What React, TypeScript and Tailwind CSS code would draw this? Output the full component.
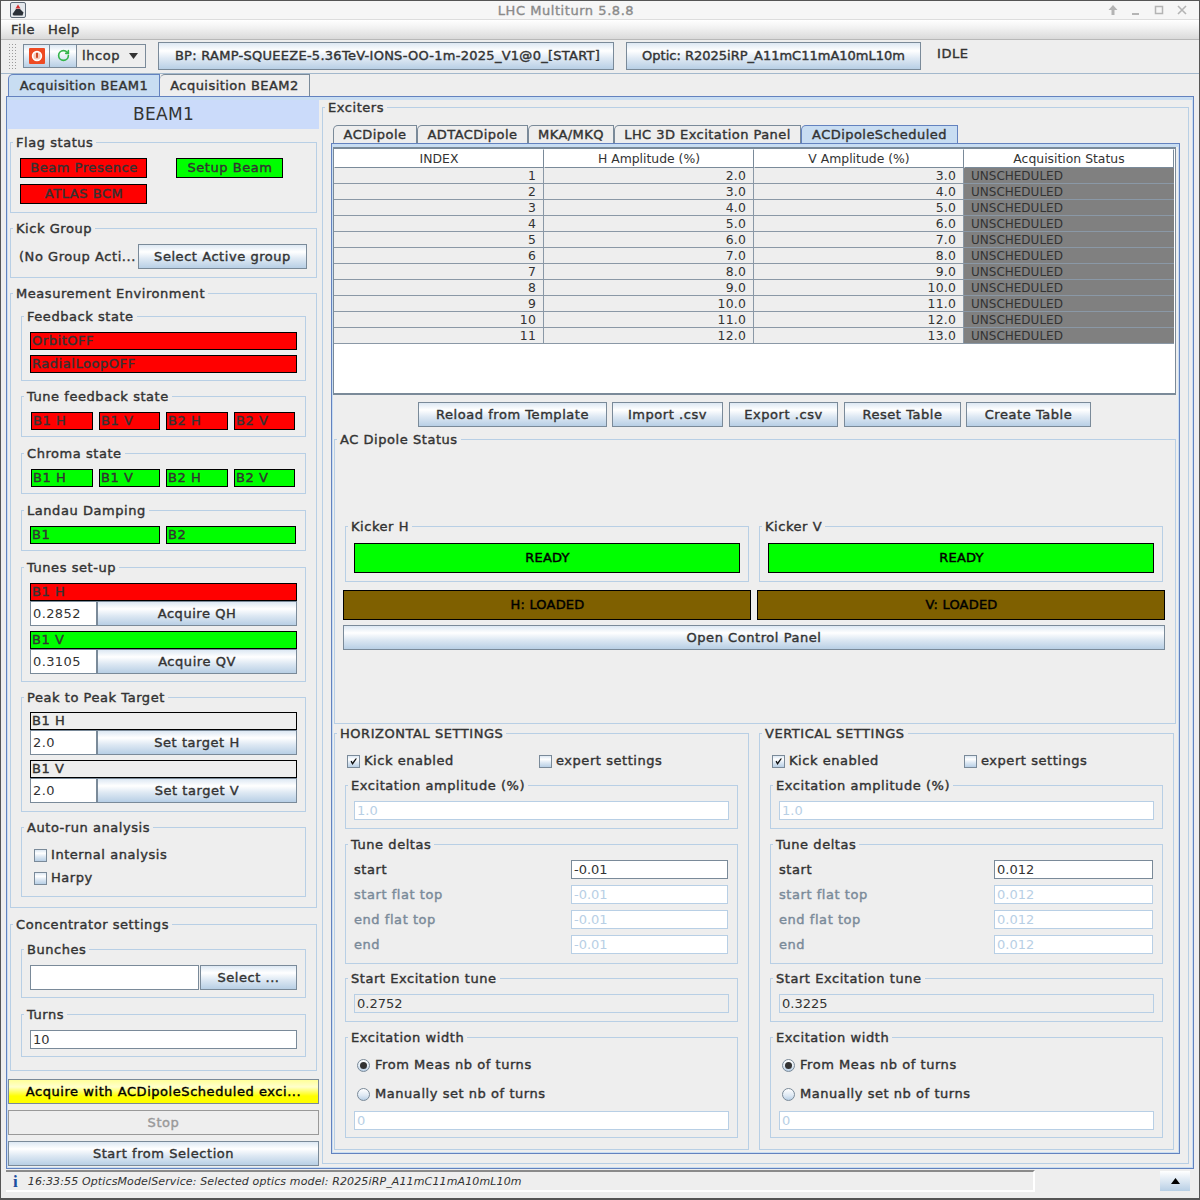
import * as React from "react";
import { RotateCw } from "lucide-react";

const GRAD = "bg-[linear-gradient(#dde8f3_0%,#ffffff_30%,#dde8f3_60%,#b8cfe5_100%)]";
const BOLD = "[-webkit-text-stroke:0.4px_#333333] tracking-[0.55px]";
const BLACK = "text-black! [-webkit-text-stroke:0.45px_#000]! tracking-[0.2px]!";

function Group({ title, className, inner, children }: { title: string; className?: string; inner?: string; children?: React.ReactNode }) {
  return (
    <fieldset className={`border border-[#b8cfe5] ${className ?? ""}`}>
      <legend className={`ml-[2px] h-[16px] px-[3px] text-[13px] leading-[18px] text-[#333333] ${BOLD}`}>{title}</legend>
      <div className={inner ?? "px-[8px] pt-[8px]"}>{children}</div>
    </fieldset>
  );
}

function Button({ label, className }: { label: string; className?: string }) {
  return <div className={`flex items-center justify-center border border-[#7a8a99] ${GRAD} text-[13px] text-[#333333] ${BOLD} ${className ?? ""}`}>{label}</div>;
}

function Pill({ label, color, className, center }: { label: string; color: string; className?: string; center?: boolean }) {
  return (
    <div className={`flex h-[18px] items-center border border-black pl-[1px] text-[13px] ${color} text-[#333333] ${BOLD} ${center ? "justify-center" : ""} ${className ?? ""}`}>
      {label}
    </div>
  );
}

function Field({ value, disabled, className }: { value: string; disabled?: boolean; className?: string }) {
  return (
    <div
      className={`flex items-center bg-white pl-[2px] text-[13px] ${
        disabled ? "border border-[#b8cfe5] text-[#b8cfe5]" : "border border-[#7a8a99] text-[#333333]"
      } ${className ?? ""}`}
    >
      {value}
    </div>
  );
}

function Check({ label, checked, className }: { label: string; checked?: boolean; className?: string }) {
  return (
    <div className={`flex items-center text-[13px] text-[#333333] ${BOLD} ${className ?? ""}`}>
      <span className={`mr-[4px] flex h-[13px] w-[13px] items-center justify-center border border-[#7a8a99] ${GRAD}`}>
        {checked && (
          <svg width="9" height="9" viewBox="0 0 9 9">
            <path d="M1.5 4.5 L3.5 8 L8 1.5 L6.5 1.5 L3.5 5.5 L2.8 3.8 Z" fill="#111" />
          </svg>
        )}
      </span>
      {label}
    </div>
  );
}

function Radio({ label, selected, className }: { label: string; selected?: boolean; className?: string }) {
  return (
    <div className={`flex items-center text-[13px] text-[#333333] ${BOLD} ${className ?? ""}`}>
      <span className="mr-[5px] flex h-[13px] w-[13px] items-center justify-center rounded-full border border-[#7a8a99] bg-[linear-gradient(#ffffff,#dde8f3_60%,#b8cfe5)]">
        {selected && <span className="h-[7px] w-[7px] rounded-full bg-[#333333]" />}
      </span>
      {label}
    </div>
  );
}

function TuneRow({ label, value, w, enabled }: { label: string; value: string; w: string; enabled?: boolean }) {
  return (
    <div className="flex h-[19px] items-center justify-between">
      <span className={`text-[13px] ${BOLD} ${enabled ? "text-[#333333]" : "text-[#7a8a99] [-webkit-text-stroke:0.4px_#7a8a99]!"}`}>{label}</span>
      <Field value={value} disabled={!enabled} className={`h-[19px] ${w}`} />
    </div>
  );
}

function Settings({ title, amp, delta, tune, fieldW }: { title: string; amp: string; delta: string; tune: string; fieldW: string }) {
  return (
    <Group title={title} className="h-[425px] w-[415px]" inner="pl-[10px]">
      <div className="mt-[10px] flex h-[20px] items-center pl-[2px]">
        <Check label="Kick enabled" checked className="w-[192px]" />
        <Check label="expert settings" />
      </div>
      <Group title="Excitation amplitude (%)" className="mt-[6px] h-[52px] w-[393px]">
        <Field value={amp} disabled className="h-[19px]" />
      </Group>
      <Group title="Tune deltas" className="mt-[7px] h-[128px] w-[393px]" inner="pl-[8px] pr-[9px] pt-[8px]">
        <div className="flex flex-col gap-[6px]">
          <TuneRow label="start" value={delta} w={fieldW} enabled />
          <TuneRow label="start flat top" value={delta} w={fieldW} />
          <TuneRow label="end flat top" value={delta} w={fieldW} />
          <TuneRow label="end" value={delta} w={fieldW} />
        </div>
      </Group>
      <Group title="Start Excitation tune" className="mt-[6px] h-[52px] w-[393px]">
        <div className="flex h-[19px] items-center border border-[#b8cfe5] bg-[#eeeeee] pl-[2px] text-[13px] text-[#333333]">{tune}</div>
      </Group>
      <Group title="Excitation width" className="mt-[7px] h-[109px] w-[393px]">
        <Radio label="From Meas nb of turns" selected className="ml-[3px] mt-[2px] h-[20px]" />
        <Radio label="Manually set nb of turns" className="ml-[3px] mt-[9px] h-[20px]" />
        <Field value="0" disabled className="mt-[7px] h-[19px]" />
      </Group>
    </Group>
  );
}

const ROWS = [
  [1, "2.0", "3.0"], [2, "3.0", "4.0"], [3, "4.0", "5.0"], [4, "5.0", "6.0"], [5, "6.0", "7.0"], [6, "7.0", "8.0"],
  [7, "8.0", "9.0"], [8, "9.0", "10.0"], [9, "10.0", "11.0"], [10, "11.0", "12.0"], [11, "12.0", "13.0"],
];

function Table() {
  const cell = "flex h-[16px] items-center justify-end border-r border-b border-[#8a98a6] bg-[#eeeeee] pt-[1px] pr-[7px] text-[12.4px] tracking-[0.2px] text-[#333333]";
  const head = "flex h-[19px] items-center justify-center border-t border-r border-b border-l border-[#7a8a99] border-t-white border-l-white pt-[1px] text-[12.4px] text-[#333333]";
  return (
    <div className="h-[248px] w-[843px] border-t-2 border-r border-b-2 border-l border-[#7a8a99] bg-white">
      <div className="grid w-[840px] grid-cols-[210px_210px_210px_210px]">
        <div className={head}>INDEX</div>
        <div className={head}>H Amplitude (%)</div>
        <div className={head}>V Amplitude (%)</div>
        <div className={head}>Acquisition Status</div>
        {ROWS.map((r) => (
          <React.Fragment key={String(r[0])}>
            <div className={cell}>{r[0]}</div>
            <div className={cell}>{r[1]}</div>
            <div className={cell}>{r[2]}</div>
            <div className="flex h-[16px] items-center border-b border-[#8a98a6] bg-[#808080] pl-[7px] text-[12px] text-[#333333]">UNSCHEDULED</div>
          </React.Fragment>
        ))}
      </div>
    </div>
  );
}

function TunePills({ color }: { color: string }) {
  return (
    <div className="flex gap-[6px]">
      <Pill label="B1 H" color={color} className="w-[62px]" />
      <Pill label="B1 V" color={color} className="w-[61px]" />
      <Pill label="B2 H" color={color} className="w-[62px]" />
      <Pill label="B2 V" color={color} className="w-[61px]" />
    </div>
  );
}

function LeftPanel() {
  return (
    <div className="w-[311px] shrink-0">
      <div className="flex h-[29px] items-center justify-center bg-[#cbdbfa] text-[17px] tracking-[0.3px] text-[#333333]">BEAM1</div>
      <div className="mt-[5px] flex flex-col pl-[2px]">
        <Group title="Flag status" className="h-[79px] w-[307px]" inner="pt-[8px] pl-[9px]">
          <div className="flex h-[20px]">
            <Pill label="Beam Presence" color="bg-[#ff0000]" center className="h-[20px] w-[127px]" />
            <Pill label="Setup Beam" color="bg-[#00ff00]" center className="ml-[29px] h-[20px] w-[107px]" />
          </div>
          <Pill label="ATLAS BCM" color="bg-[#ff0000]" center className="mt-[6px] h-[20px] w-[127px]" />
        </Group>
        <Group title="Kick Group" className="mt-[7px] h-[58px] w-[307px]" inner="pt-[8px] pl-[8px]">
          <div className="flex h-[25px] items-center">
            <span className={`w-[119px] whitespace-nowrap text-[13px] text-[#333333] ${BOLD}`}>(No Group Acti...</span>
            <Button label="Select Active group" className="h-[25px] w-[169px]" />
          </div>
        </Group>
        <Group title="Measurement Environment" className="mt-[7px] h-[623px] w-[307px]" inner="px-[10px]">
          <Group title="Feedback state" className="mt-[7px] h-[73px] w-[285px]">
            <Pill label="OrbitOFF" color="bg-[#ff0000]" className="w-[267px]" />
            <Pill label="RadialLoopOFF" color="bg-[#ff0000]" className="mt-[5px] w-[267px]" />
          </Group>
          <Group title="Tune feedback state" className="mt-[7px] h-[49px] w-[285px]" inner="pl-[9px] pt-[8px]">
            <TunePills color="bg-[#ff0000]" />
          </Group>
          <Group title="Chroma state" className="mt-[8px] h-[49px] w-[285px]" inner="pl-[9px] pt-[8px]">
            <TunePills color="bg-[#00ff00]" />
          </Group>
          <Group title="Landau Damping" className="mt-[8px] h-[49px] w-[285px]">
            <div className="flex gap-[6px]">
              <Pill label="B1" color="bg-[#00ff00]" className="w-[130px]" />
              <Pill label="B2" color="bg-[#00ff00]" className="w-[130px]" />
            </div>
          </Group>
          <Group title="Tunes set-up" className="mt-[8px] h-[123px] w-[285px]">
            <Pill label="B1 H" color="bg-[#ff0000]" className="w-[267px]" />
            <div className="flex h-[25px]">
              <Field value="0.2852" className="w-[67px] tracking-[0.4px]" />
              <Button label="Acquire QH" className="w-[200px]" />
            </div>
            <Pill label="B1 V" color="bg-[#00ff00]" className="mt-[5px] w-[267px]" />
            <div className="flex h-[25px]">
              <Field value="0.3105" className="w-[67px] tracking-[0.4px]" />
              <Button label="Acquire QV" className="w-[200px]" />
            </div>
          </Group>
          <Group title="Peak to Peak Target" className="mt-[7px] h-[123px] w-[285px]" inner="px-[8px] pt-[7px]">
            <Pill label="B1 H" color="bg-[#eeeeee]" className="w-[267px]" />
            <div className="flex h-[25px]">
              <Field value="2.0" className="w-[67px] tracking-[0.4px]" />
              <Button label="Set target H" className="w-[200px]" />
            </div>
            <Pill label="B1 V" color="bg-[#eeeeee]" className="mt-[5px] w-[267px]" />
            <div className="flex h-[25px]">
              <Field value="2.0" className="w-[67px] tracking-[0.4px]" />
              <Button label="Set target V" className="w-[200px]" />
            </div>
          </Group>
          <Group title="Auto-run analysis" className="mt-[7px] h-[78px] w-[285px]" inner="pl-[12px] pt-[7px]">
            <Check label="Internal analysis" className="mt-[3px] h-[20px]" />
            <Check label="Harpy" className="mt-[3px] h-[20px]" />
          </Group>
        </Group>
        <Group title="Concentrator settings" className="mt-[8px] h-[155px] w-[307px]" inner="px-[10px]">
          <Group title="Bunches" className="mt-[9px] h-[57px] w-[285px]">
            <div className="flex h-[25px] justify-between">
              <Field value="" className="w-[169px]" />
              <Button label="Select ..." className="w-[97px]" />
            </div>
          </Group>
          <Group title="Turns" className="mt-[8px] h-[51px] w-[285px]">
            <Field value="10" className="h-[19px] w-[267px]" />
          </Group>
        </Group>
      </div>
      <div className="mt-[8px] flex flex-col gap-[6px]">
        <div className="flex h-[25px] items-center justify-center border border-[#7a8a99] bg-[linear-gradient(#ffff99,#ffffcc_30%,#ffff00_70%,#ffff00)] text-[13px] tracking-[0.55px] text-black [-webkit-text-stroke:0.4px_#000]">Acquire with ACDipoleScheduled exci...</div>
        <div className="flex h-[25px] items-center justify-center border border-[#999999] text-[13px] tracking-[0.55px] text-[#999999] [-webkit-text-stroke:0.4px_#999999]">Stop</div>
        <Button label="Start from Selection" className="h-[25px]" />
      </div>
    </div>
  );
}

function InnerTab({ label, active, className }: { label: string; active?: boolean; className?: string }) {
  return (
    <div className={`flex h-[18px] items-center justify-center rounded-tl-[5px] border-t border-r border-l text-[13px] text-[#333333] ${BOLD} tracking-[0.45px]! ${active ? "border-[#6382bf] bg-[#c8ddf2]" : "border-[#7a8a99] bg-[#eeeeee]"} ${className ?? ""}`}>
      {label}
    </div>
  );
}

function RightPanel() {
  return (
    <Group title="Exciters" className="-mt-[1px] ml-[3px] h-[1065px] w-[867px]" inner="pl-[8px]">
      <div className="mt-[10px] flex pl-[2px]">
        <InnerTab label="ACDipole" className="w-[84px]" />
        <InnerTab label="ADTACDipole" className="w-[111px]" />
        <InnerTab label="MKA/MKQ" className="w-[86px]" />
        <InnerTab label="LHC 3D Excitation Panel" className="w-[187px]" />
        <InnerTab label="ACDipoleScheduled" active className="w-[157px]" />
      </div>
      <div className="h-[1011px] w-[849px] border border-[#6382bf]">
        <div className="h-full border border-t-[3px] border-[#c8ddf2]">
          <Table />
          <div className="mt-[7px] flex pl-[85px]">
            <Button label="Reload from Template" className="h-[25px] w-[189px]" />
            <Button label="Import .csv" className="ml-[5px] h-[25px] w-[111px]" />
            <Button label="Export .csv" className="ml-[6px] h-[25px] w-[109px]" />
            <Button label="Reset Table" className="ml-[6px] h-[25px] w-[117px]" />
            <Button label="Create Table" className="ml-[5px] h-[25px] w-[125px]" />
          </div>
          <Group title="AC Dipole Status" className="ml-[1px] mt-[4px] h-[293px] w-[842px]" inner="">
            <div className="ml-[10px] mt-[71px] flex gap-[10px]">
              <Group title="Kicker H" className="h-[64px] w-[404px]" inner="px-[8px] pt-[9px]">
                <Pill label="READY" color="bg-[#00ff00]" center className={`h-[30px] w-[386px] ${BLACK}`} />
              </Group>
              <Group title="Kicker V" className="h-[64px] w-[404px]" inner="px-[8px] pt-[9px]">
                <Pill label="READY" color="bg-[#00ff00]" center className={`h-[30px] w-[386px] ${BLACK}`} />
              </Group>
            </div>
            <div className="ml-[8px] mt-[8px] flex gap-[6px]">
              <Pill label="H: LOADED" color="bg-[#7f6000]" center className={`h-[30px] w-[408px] ${BLACK}`} />
              <Pill label="V: LOADED" color="bg-[#7f6000]" center className={`h-[30px] w-[408px] ${BLACK}`} />
            </div>
            <Button label="Open Control Panel" className="ml-[8px] mt-[5px] h-[25px] w-[822px]" />
          </Group>
          <div className="ml-[1px] mt-[1px] flex gap-[10px]">
            <Settings title="HORIZONTAL SETTINGS" amp="1.0" delta="-0.01" tune="0.2752" fieldW="w-[157px]" />
            <Settings title="VERTICAL SETTINGS" amp="1.0" delta="0.012" tune="0.3225" fieldW="w-[159px]" />
          </div>
        </div>
      </div>
    </Group>
  );
}

export default function App() {
  return (
    <div className="flex h-[1200px] w-[1200px] flex-col overflow-hidden border-t border-r border-b-2 border-l border-[#555555] bg-[#eeeeee] font-['DejaVu_Sans',sans-serif] text-[13px] text-[#333333]">
      <div className="flex h-[18px] shrink-0 items-center bg-[#f6f6f6] pl-[9px] pr-[3px]">
        <svg width="16" height="16" viewBox="0 0 16 16">
          <rect x="0.5" y="0.5" width="15" height="15" rx="1.5" fill="#e4e8ec" stroke="#5f6b78" />
          <path d="M2.5 12 L6 7 L10 7 L13.5 10.5 L12.5 13.5 L3.5 13.5 Z" fill="#2b3138" />
          <path d="M8 2.5 L10.5 6.5 L5.5 6.5 Z" fill="#d03030" />
        </svg>
        <span className="mt-[2px] grow text-center text-[13px] tracking-[0.55px] text-[#8a8a8a] [-webkit-text-stroke:0.35px_#8a8a8a]">LHC Multiturn 5.8.8</span>
        <div className="flex items-center gap-[9px] pr-[7px]">
          <svg width="14" height="14" viewBox="0 0 14 14"><path d="M7 2 L11.5 7 L8.5 7 L8.5 12 L5.5 12 L5.5 7 L2.5 7 Z" fill="#b4b4b4" /></svg>
          <svg width="14" height="14" viewBox="0 0 14 14"><rect x="3" y="10" width="7" height="2" fill="#b4b4b4" /></svg>
          <svg width="14" height="14" viewBox="0 0 14 14"><rect x="3.5" y="3.5" width="7" height="7" fill="none" stroke="#b4b4b4" strokeWidth="1.5" /></svg>
          <svg width="14" height="14" viewBox="0 0 14 14"><path d="M3 3 L11 11 M11 3 L3 11" stroke="#b4b4b4" strokeWidth="1.6" /></svg>
        </div>
      </div>
      <div className={`flex h-[20px] shrink-0 items-center gap-[13px] border-t border-[#dddddd] bg-[linear-gradient(#ffffff,#f2f2f2_40%,#dadada)] pl-[10px] text-[13px] ${BOLD}`}>
        <span>File</span>
        <span>Help</span>
      </div>
      <div className="flex h-[34px] shrink-0 items-center border-t border-[#b8b8b8] pb-[2px] pl-[7px]">
        <div className="h-[26px] w-[9px] bg-[radial-gradient(#9a9a9a_0.8px,transparent_1px)] bg-[length:3px_3px]" />
        <div className="ml-[6px] flex h-[24px]">
          <div className={`flex w-[27px] items-center justify-center border border-[#7a8a99] ${GRAD}`}>
            <span className="flex h-[16px] w-[16px] items-center justify-center rounded-[1px] bg-[#ee4a22]">
              <svg width="12" height="12" viewBox="0 0 12 12"><circle cx="6" cy="6" r="4.4" fill="#f6c9b8" stroke="#fff" strokeWidth="1.6" /><rect x="5.1" y="2.8" width="1.8" height="5" fill="#c93a18" /></svg>
            </span>
          </div>
          <div className={`flex w-[27px] items-center justify-center border-y border-r border-[#7a8a99] ${GRAD}`}>
            <RotateCw size={13} color="#35b54a" strokeWidth={3} />
          </div>
          <div className={`flex w-[69px] items-center border-y border-r border-[#7a8a99] pl-[5px] text-[13px] ${BOLD}`}>
            lhcop
            <svg className="ml-[9px]" width="9" height="6" viewBox="0 0 9 6"><path d="M0 0 H9 L4.5 6 Z" fill="#333" /></svg>
          </div>
        </div>
        <Button label="BP: RAMP-SQUEEZE-5.36TeV-IONS-OO-1m-2025_V1@0_[START]" className="ml-[12px] h-[28px] w-[456px] pl-[3px] tracking-[0.27px]!" />
        <Button label="Optic: R2025iRP_A11mC11mA10mL10m" className="ml-[12px] h-[28px] w-[295px] tracking-[0px]!" />
        <span className={`mb-[4px] ml-[16px] ${BOLD}`}>IDLE</span>
      </div>
      <div className="flex h-[23px] shrink-0 items-end border-t border-[#a3b8cc] pl-[7px]">
        <div className={`flex h-[22px] w-[152px] items-center justify-center rounded-tl-[5px] border-t border-r border-l border-[#6382bf] bg-[#c8ddf2] ${BOLD} tracking-[0.45px]!`}>Acquisition BEAM1</div>
        <div className={`flex h-[22px] w-[150px] items-center justify-center rounded-tl-[5px] border-t border-r border-[#7a8a99] ${BOLD} tracking-[0.45px]!`}>Acquisition BEAM2</div>
      </div>
      <div className="ml-[5px] h-[1073px] w-[1188px] shrink-0 border border-[#6382bf]">
        <div className="flex h-full border border-t-[3px] border-[#c8ddf2]">
          <LeftPanel />
          <RightPanel />
        </div>
      </div>
      <div className="ml-[5px] mt-[1px] flex h-[22px] items-center">
        <div className="flex h-[22px] w-[1029px] items-center border-t-2 border-r-2 border-b-2 border-t-[#8a8a8a] border-r-white border-b-white pl-[7px] pt-[2px] text-[11px] italic tracking-[0.13px]">
          <span className="mr-[10px] font-['Liberation_Serif',serif] text-[17px] font-bold not-italic text-[#1a4fa0]">i</span>
          16:33:55 OpticsModelService: Selected optics model: R2025iRP_A11mC11mA10mL10m
        </div>
        <div className="ml-[125px] flex h-[20px] w-[30px] items-center justify-center bg-[linear-gradient(#ffffff,#b8cfe5)]">
          <svg width="9" height="6" viewBox="0 0 9 6"><path d="M4.5 0 L9 6 H0 Z" fill="#000" /></svg>
        </div>
      </div>
    </div>
  );
}
